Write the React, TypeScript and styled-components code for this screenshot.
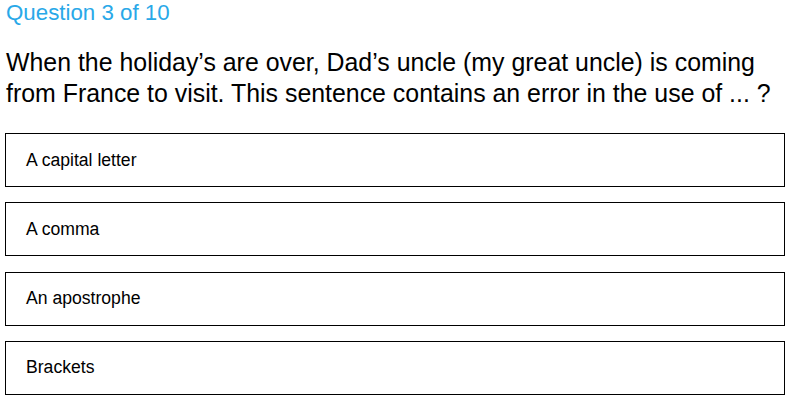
import React from "react";
import styled, { createGlobalStyle } from "styled-components";

const GlobalStyle = createGlobalStyle`
  html, body {
    margin: 0;
    padding: 0;
    background: #fff;
  }
  body {
    font-family: "Liberation Sans", Arial, sans-serif;
  }
`;

const Page = styled.div`
  width: 794px;
  height: 404px;
  padding: 0 9px 0 5px;
  box-sizing: border-box;
  overflow: hidden;
`;

const Counter = styled.div`
  color: #29a8e8;
  font-size: 22.3px;
  line-height: 26px;
  padding: 0 0 0 1px;
`;

const Question = styled.p`
  margin: 21px 0 0 1px;
  color: #000;
  font-size: 24.9px;
  line-height: 31px;
`;

const Options = styled.div`
  margin-top: 24px;
  display: flex;
  flex-direction: column;
  gap: 15.3px;
`;

const Option = styled.button`
  display: flex;
  align-items: center;
  height: 54px;
  width: 100%;
  box-sizing: border-box;
  padding: 0 20px;
  background: #fff;
  border: 1px solid #000;
  border-radius: 0;
  font-family: "Liberation Sans", Arial, sans-serif;
  font-size: 17.6px;
  color: #000;
  text-align: left;
  cursor: pointer;
`;

const answers = ["A capital letter", "A comma", "An apostrophe", "Brackets"];

export default function App() {
  return (
    <Page>
      <GlobalStyle />
      <Counter>Question 3 of 10</Counter>
      <Question>
        When the holiday’s are over, Dad’s uncle (my great uncle) is coming
        from France to visit. This sentence contains an error in the use of ... ?
      </Question>
      <Options>
        {answers.map((a) => (
          <Option key={a}>{a}</Option>
        ))}
      </Options>
    </Page>
  );
}
